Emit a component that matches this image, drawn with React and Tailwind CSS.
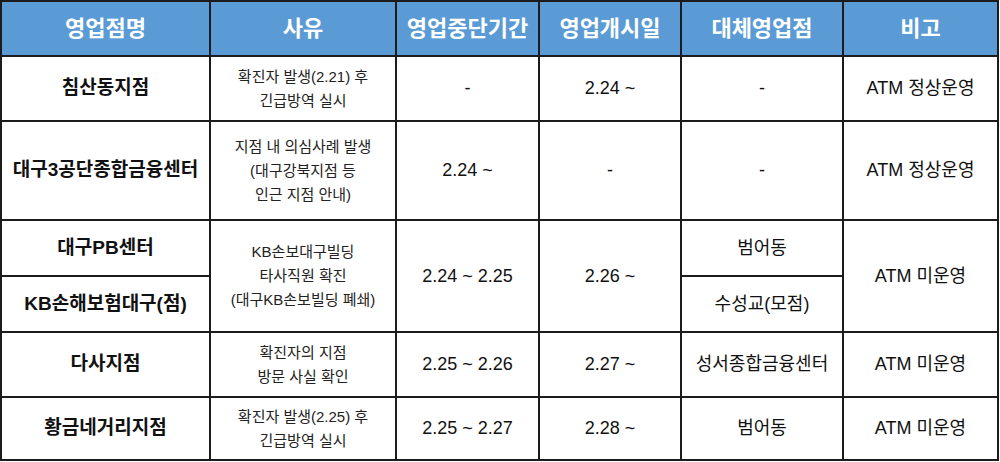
import React from "react";

const font = { fontFamily: "'Liberation Sans', 'Noto Sans CJK KR', sans-serif" };

const headers = ["영업점명", "사유", "영업중단기간", "영업개시일", "대체영업점", "비고"];

function Cell({ className = "", children }) {
  return (
    <div className={"bg-white flex flex-col items-center justify-center text-center " + className}>
      {children}
    </div>
  );
}

function Name({ children, className = "" }) {
  return <Cell className={"text-[19px] font-bold text-[#111] " + className}>{children}</Cell>;
}

function Reason({ lines, className = "" }) {
  return (
    <Cell className={"text-[15px] leading-6 text-[#222] " + className}>
      {lines.map((l) => (
        <span key={l}>{l}</span>
      ))}
    </Cell>
  );
}

function Val({ children, className = "" }) {
  return <Cell className={"text-[18px] text-[#111] " + className}>{children}</Cell>;
}

export default function App() {
  return (
    <div className="w-[1000px] h-[462px] bg-white" style={font}>
      <div className="w-[999px] grid grid-cols-[207px_184px_141px_140px_160px_153px] grid-rows-[53px_63px_97px_54px_54px_63px_61px] gap-[2px] p-[2px] bg-[#1c1c1c]">
        {headers.map((h) => (
          <div key={h} className="bg-[#5b9bd5] flex items-center justify-center text-white font-bold text-[22px]">
            {h}
          </div>
        ))}

        {/* 침산동지점 */}
        <Name>침산동지점</Name>
        <Reason lines={["확진자 발생(2.21) 후", "긴급방역 실시"]} />
        <Val>-</Val>
        <Val>2.24 ~</Val>
        <Val>-</Val>
        <Val>ATM 정상운영</Val>

        {/* 대구3공단 */}
        <Name>대구3공단종합금융센터</Name>
        <Reason lines={["지점 내 의심사례 발생", "(대구강북지점 등", "인근 지점 안내)"]} />
        <Val>2.24 ~</Val>
        <Val>-</Val>
        <Val>-</Val>
        <Val>ATM 정상운영</Val>

        {/* 대구PB센터 / KB손해보험대구(점) */}
        <Name>대구PB센터</Name>
        <Reason className="row-span-2" lines={["KB손보대구빌딩", "타사직원 확진", "(대구KB손보빌딩 폐쇄)"]} />
        <Val className="row-span-2">2.24 ~ 2.25</Val>
        <Val className="row-span-2">2.26 ~</Val>
        <Val>범어동</Val>
        <Val className="row-span-2">ATM 미운영</Val>
        <Name>KB손해보험대구(점)</Name>
        <Val>수성교(모점)</Val>

        {/* 다사지점 */}
        <Name>다사지점</Name>
        <Reason lines={["확진자의 지점", "방문 사실 확인"]} />
        <Val>2.25 ~ 2.26</Val>
        <Val>2.27 ~</Val>
        <Val>성서종합금융센터</Val>
        <Val>ATM 미운영</Val>

        {/* 황금네거리지점 */}
        <Name>황금네거리지점</Name>
        <Reason lines={["확진자 발생(2.25) 후", "긴급방역 실시"]} />
        <Val>2.25 ~ 2.27</Val>
        <Val>2.28 ~</Val>
        <Val>범어동</Val>
        <Val>ATM 미운영</Val>
      </div>
    </div>
  );
}
